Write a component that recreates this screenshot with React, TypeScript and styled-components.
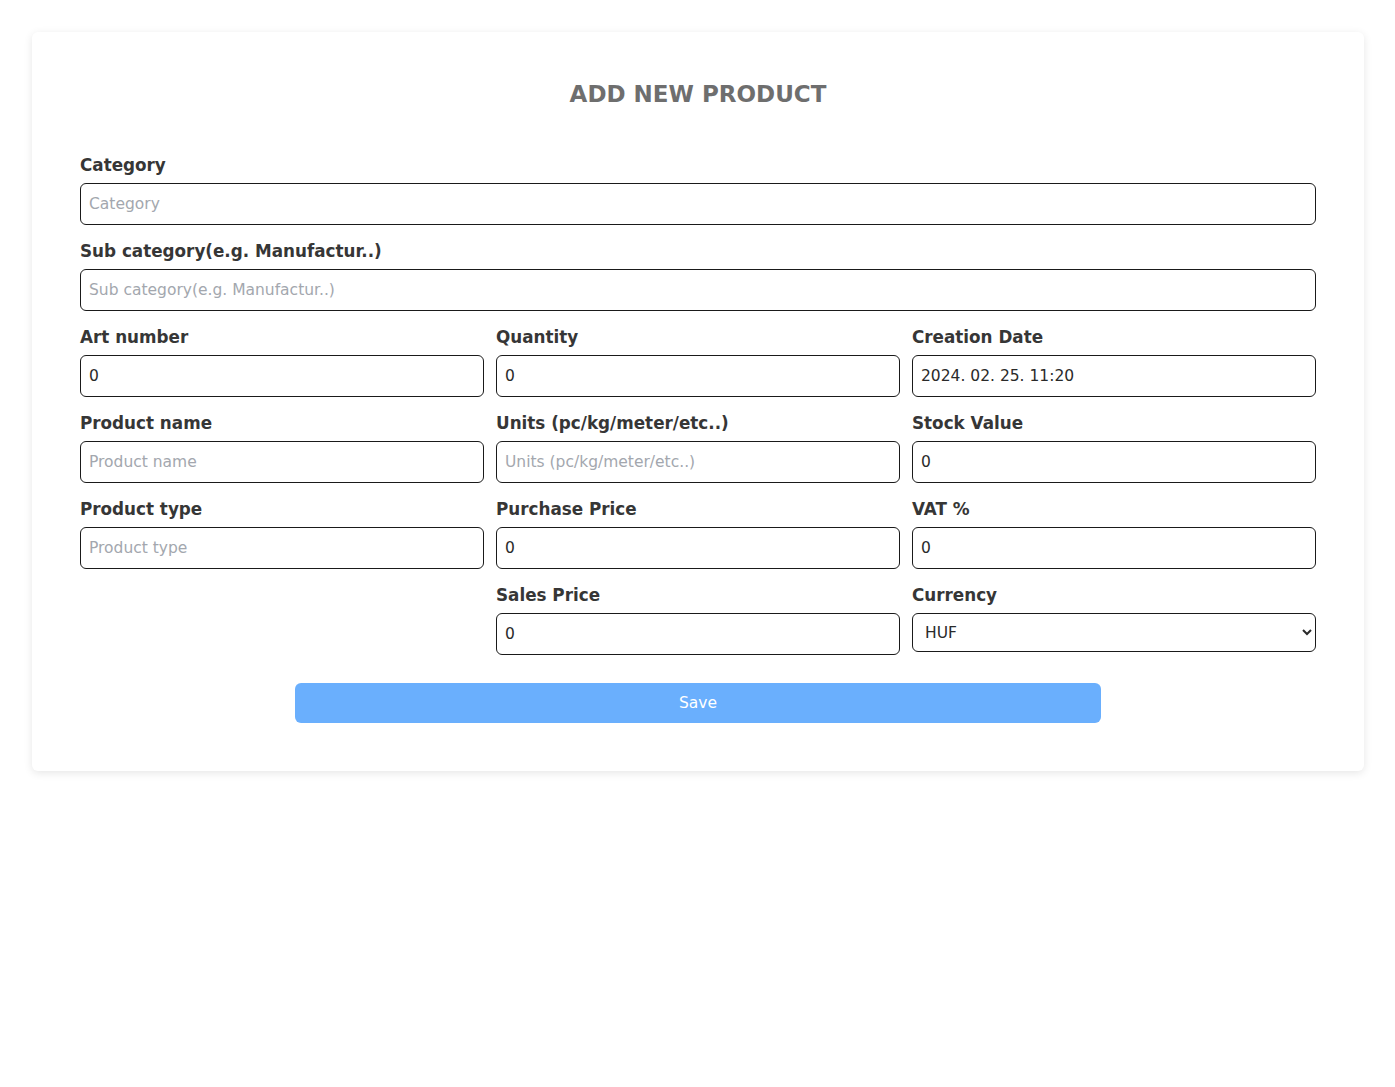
import React from "react";
import styled, { createGlobalStyle } from "styled-components";

const Global = createGlobalStyle`
  html, body { margin: 0; padding: 0; background: #ffffff; }
  body { font-family: "DejaVu Sans", "Liberation Sans", sans-serif; }
  * { box-sizing: border-box; }
`;

const Page = styled.div`
  padding: 32px 31px 32px 32px;
`;

const Card = styled.div`
  background: #fff;
  border-radius: 6px;
  box-shadow: 0 2px 8px rgba(0, 0, 0, 0.1);
  padding: 48px;
  display: flex;
  flex-direction: column;
`;

const Title = styled.h1`
  margin: 0 0 44px;
  text-align: center;
  font-size: 23px;
  line-height: 28px;
  font-weight: 700;
  color: #6e6e6e;
`;

const Form = styled.form`
  display: flex;
  flex-direction: column;
  gap: 13px;
`;

const Grid = styled.div`
  display: grid;
  grid-template-columns: repeat(3, 1fr);
  column-gap: 12px;
  row-gap: 13px;
`;

const Field = styled.div<{ $col?: number }>`
  display: flex;
  flex-direction: column;
  grid-column: ${(p) => (p.$col ? `${p.$col}` : "auto")};
`;

const Label = styled.label`
  font-size: 16.8px;
  line-height: 24px;
  padding-top: 1px;
  font-weight: 700;
  color: #363636;
  margin-bottom: 6px;
`;

const Input = styled.input`
  height: 42px;
  width: 100%;
  border: 1px solid #1a1a1a;
  border-radius: 6px;
  padding: 0 8px;
  font-family: inherit;
  font-size: 15.5px;
  color: #2a2a2a;
  background: #fff;
  outline: none;
  &::placeholder {
    color: #a3a7ae;
  }
`;

const Select = styled.select`
  height: 39px;
  width: 100%;
  border: 1px solid #1a1a1a;
  border-radius: 6px;
  padding: 0 8px;
  font-family: inherit;
  font-size: 15.5px;
  color: #2a2a2a;
  background: #fff;
  outline: none;
`;

const Button = styled.button`
  align-self: center;
  width: 806px;
  height: 40px;
  margin-top: 15px;
  border: none;
  border-radius: 6px;
  background: #6aaffd;
  color: #fff;
  font-family: inherit;
  font-size: 15.5px;
  cursor: pointer;
`;

type F = { label: string; value?: string; col?: number };

const gridFields: F[] = [
  { label: "Art number", value: "0" },
  { label: "Quantity", value: "0" },
  { label: "Creation Date", value: "2024. 02. 25. 11:20" },
  { label: "Product name" },
  { label: "Units (pc/kg/meter/etc..)" },
  { label: "Stock Value", value: "0" },
  { label: "Product type" },
  { label: "Purchase Price", value: "0" },
  { label: "VAT %", value: "0" },
  { label: "Sales Price", value: "0", col: 2 },
];

function TextField({ label, value, col }: F) {
  return (
    <Field $col={col}>
      <Label>{label}</Label>
      {value !== undefined ? (
        <Input defaultValue={value} />
      ) : (
        <Input placeholder={label} />
      )}
    </Field>
  );
}

export default function App() {
  return (
    <>
      <Global />
      <Page>
        <Card>
          <Title>ADD NEW PRODUCT</Title>
          <Form onSubmit={(e) => e.preventDefault()}>
            <TextField label="Category" />
            <TextField label="Sub category(e.g. Manufactur..)" />
            <Grid>
              {gridFields.map((f) => (
                <TextField key={f.label} {...f} />
              ))}
              <Field>
                <Label>Currency</Label>
                <Select defaultValue="HUF">
                  <option value="HUF">HUF</option>
                  <option value="EUR">EUR</option>
                  <option value="USD">USD</option>
                </Select>
              </Field>
            </Grid>
            <Button type="submit">Save</Button>
          </Form>
        </Card>
      </Page>
    </>
  );
}
